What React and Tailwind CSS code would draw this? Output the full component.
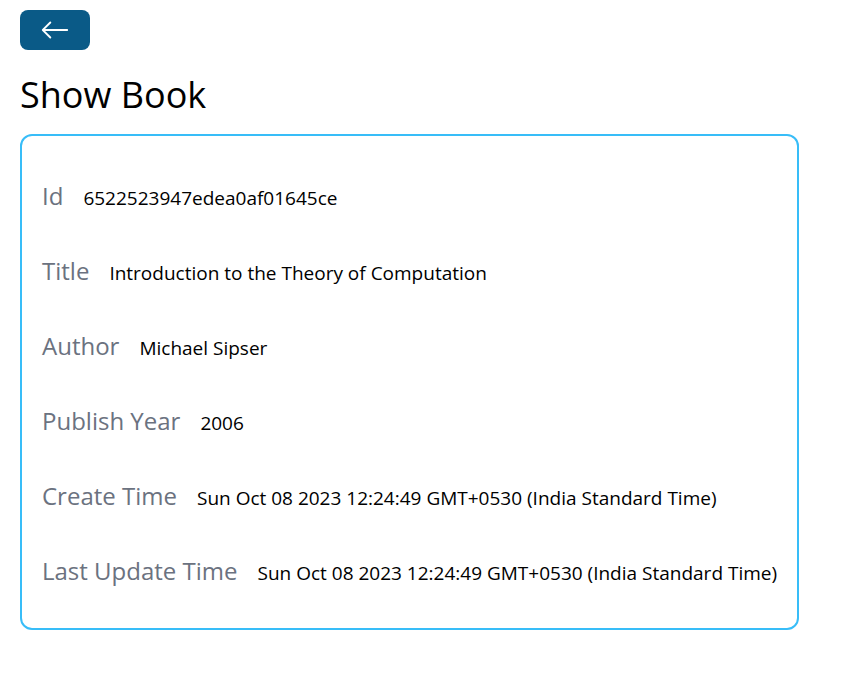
import { BsArrowLeft } from "react-icons/bs";

const book = {
  _id: "6522523947edea0af01645ce",
  title: "Introduction to the Theory of Computation",
  author: "Michael Sipser",
  publishYear: 2006,
  createdAt: "Sun Oct 08 2023 12:24:49 GMT+0530 (India Standard Time)",
  updatedAt: "Sun Oct 08 2023 12:24:49 GMT+0530 (India Standard Time)",
};

function Row({ label, value }) {
  return (
    <div className="h-[75px] flex items-center">
      <div className="flex items-baseline">
        <span className="text-2xl mr-5 text-[#6b7280]">{label}</span>
        <span className="text-[19px] text-black">{value}</span>
      </div>
    </div>
  );
}

export default function App() {
  return (
    <div className="px-5 pt-2.5 bg-white min-h-screen" style={{ fontFamily: '"Open Sans", "Noto Sans", sans-serif' }}>
      <div className="flex">
        <button className="bg-[#0a5a87] text-white w-[70px] h-10 rounded-lg flex items-center justify-center">
          <BsArrowLeft size={30} />
        </button>
      </div>
      <h1 className="text-4xl text-black mt-[25px] mb-[19px] leading-10">Show Book</h1>
      <div className="flex flex-col border-2 border-[#38bdf8] rounded-xl w-fit px-5 pt-[23px] pb-[19px]">
        <Row label="Id" value={book._id} />
        <Row label="Title" value={book.title} />
        <Row label="Author" value={book.author} />
        <Row label="Publish Year" value={book.publishYear} />
        <Row label="Create Time" value={book.createdAt} />
        <Row label="Last Update Time" value={book.updatedAt} />
      </div>
    </div>
  );
}
